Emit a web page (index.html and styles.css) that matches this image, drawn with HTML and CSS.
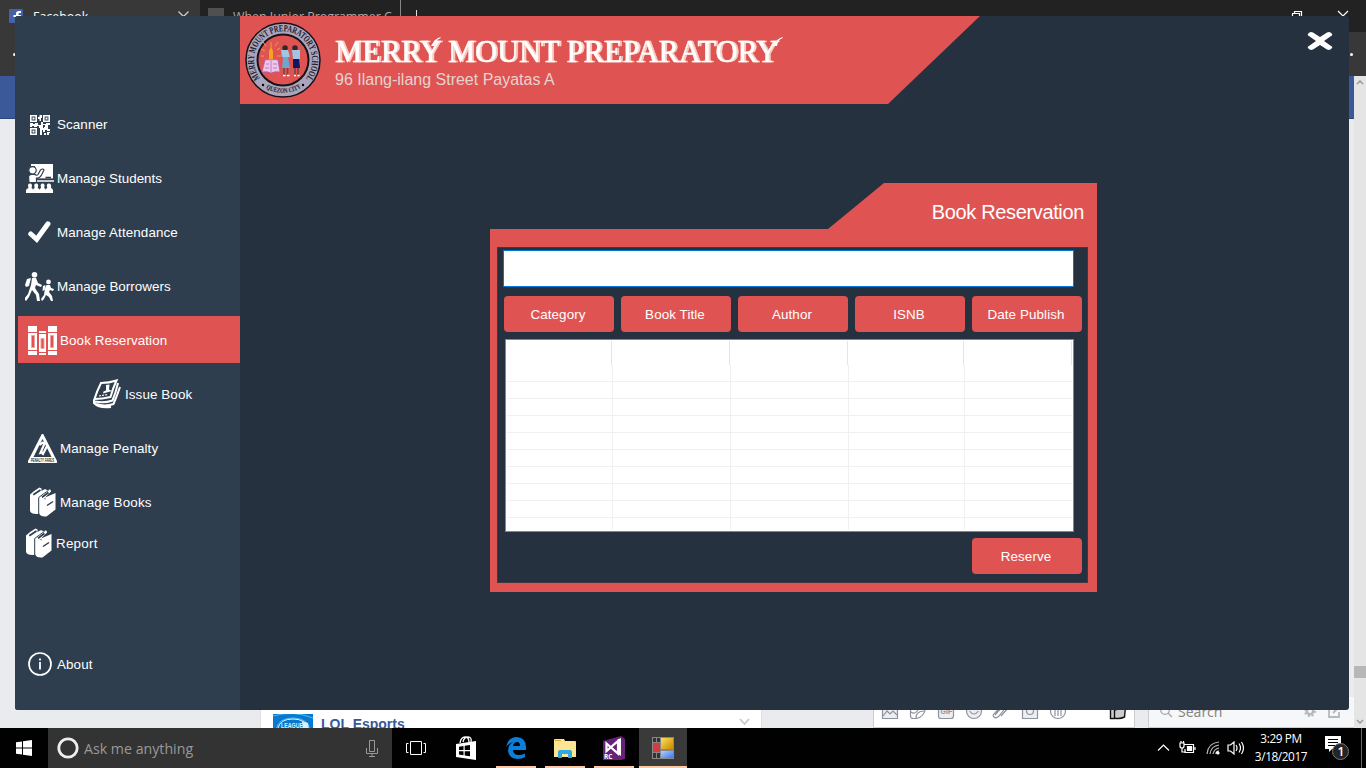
FILE: index.html
```html
<!DOCTYPE html>
<html lang="en">
<head>
<meta charset="utf-8">
<title>Merry Mount Preparatory</title>
<link rel="stylesheet" href="styles.css">
</head>
<body>
<svg width="0" height="0" class="defs">
  <symbol id="books" viewBox="0 0 26 30">
    <path fill="#fff" d="M0 7.500Q5 3 9.500 .5L11.500 1.500V4L14 2.500Q16 1.500 17 3.500L19.500 2.500Q21 2 21 4.500L15 10.500 25.500 6V22.500L16.500 29.500Q10 30 9.300 26.500L8 27Q1 27.500 0 24z"/>
    <path fill="none" stroke="#2f3e4e" stroke-width="1" d="M8.700 27V10.500Q13 7 18.500 3.500"/>
    <path fill="none" stroke="#2f3e4e" stroke-width="1.700" d="M3.300 7.800 10.500 3M12 10.300 18.500 5.500"/>
    <path stroke="#2f3e4e" stroke-width="1.500" d="M17 18.500 23 14.500"/>
    <path stroke="#2f3e4e" stroke-width=".6" fill="none" d="M13.800 11.500 16 12"/>
  </symbol>
</svg>
<div class="desktop">
  <div class="browser">
    <div class="tabs">
      <div class="tab active">
        <svg width="14" height="14" viewBox="0 0 14 14"><rect width="14" height="14" rx="1" fill="#4362a8"/><path d="M7 14V8H4.500V6H7V4.500Q7 2 10 2h2v2h-1.500q-1 0-1 1v1H12l-.4 2H9.500v6z" fill="#fff"/></svg>
        <span>Facebook</span>
        <svg width="11" height="8" viewBox="0 0 11 8"><path d="M.5 .5 5.500 5.500 10.500 .5" fill="none" stroke="#ccc" stroke-width="1.300"/></svg>
      </div>
      <div class="tab second"><i></i><span>When Junior Programmer C</span></div>
      <div class="newtab"></div>
      <svg class="winctl" width="66" height="16" viewBox="0 0 66 16"><path d="M7.500 16v-2.500h7V16M9.500 13.500v-2h7V16M53 11l5 5 5-5" fill="none" stroke="#fff" stroke-width="1.200"/></svg>
    </div>
    <div class="toolbar"><span class="back"></span><span class="dot"></span></div>
    <div class="site">
      <div class="page">
        <div class="bluebar"></div>
        <div class="feedrow">
          <div class="post">
            <svg width="40" height="16" viewBox="0 0 40 16"><rect width="40" height="16" fill="#0879cf"/><path d="M0 2Q20-4 40 4M3 16Q5 4 20 4T37 16" stroke="#55b9ee" fill="none"/><path d="M5 14Q7 5 20 5T35 15" stroke="#d8f1ff" fill="none"/><path d="M29 7l6 2 1 7h-6z" fill="#d8f1ff"/><text x="8" y="13.500" font-size="7" font-weight="bold" fill="#d8f1ff" textLength="22" lengthAdjust="spacingAndGlyphs">LEAGUE</text></svg>
            <b>LOL Esports</b>
            <svg class="chev" width="11" height="8" viewBox="0 0 11 8"><path d="M1 1 5.500 6 10 1" fill="none" stroke="#c5c8ce" stroke-width="1.800"/></svg>
          </div>
          <div class="composer">
            <svg width="254" height="18" viewBox="0 0 254 18" fill="none" stroke="#8e939d" stroke-width="1.200">
              <path d="M8.500 0V14.500H23.500V0" fill="#eceef0"/><path d="M9 12l4-5 3 3 3-3 4 4"/>
              <path d="M36.500 4v8q0 2.500 3 2.500h3q8-2 9-10.500V2M37 8q4 3 7-2M42 14q0-7 8-7"/>
              <path d="M64.500 0V12q0 2.500 2.500 2.500h10q2.500 0 2.500-2.500V0" fill="#eceef0"/><text x="66.500" y="10" font-size="7" font-weight="bold" fill="#8e939d" stroke="none">GIF</text>
              <circle cx="100" cy="7" r="7.500" fill="#eceef0"/><path d="M95.500 7q4.500 6 9 0"/>
              <path d="M121 11l8-9q3-3 4 0l-8 10q-3 3-5 1t1-4l7-8M127 12l8-9"/>
              <path d="M148.500 1V14.500h15V1" fill="#eceef0"/><circle cx="156" cy="7" r="3.500"/>
              <circle cx="184" cy="7" r="7.500"/><path d="M181 3v9M184 3v9M187 3v9"/>
              <path d="M236.500 5v9.500h4V5zM240.500 6q3 0 4-3h7l-1 10q-5 2.500-10 1z" stroke="#111" stroke-width="1.400" fill="#ccc"/>
            </svg>
          </div>
          <div class="chatsearch">
            <svg width="14" height="14" viewBox="0 0 14 14"><circle cx="6" cy="5" r="4.300" fill="none" stroke="#a3a7ae" stroke-width="1.300"/><path d="M9 8l4 4" stroke="#a3a7ae" stroke-width="1.300"/></svg>
            <span>Search</span>
            <svg width="38" height="14" viewBox="0 0 38 14"><circle cx="6" cy="6" r="3.200" fill="none" stroke="#b5b8be" stroke-width="2.500"/><circle cx="6" cy="6" r="5" fill="none" stroke="#b5b8be" stroke-width="2" stroke-dasharray="2 1.930"/><path d="M30 2h-5v10h10V7M29 8l6-6" fill="none" stroke="#b5b8be" stroke-width="1.800"/></svg>
          </div>
        </div>
      </div>
      <div class="scroll">
        <svg width="12" height="12" viewBox="0 0 12 12"><path d="M3 8l3-3 3 3" fill="none" stroke="#999" stroke-width="1.500"/></svg>
        <i></i>
        <svg width="12" height="12" viewBox="0 0 12 12"><path d="M3 4l3 3 3-3" fill="none" stroke="#999" stroke-width="1.500"/></svg>
      </div>
    </div>
  </div>

  <div class="taskbar">
    <div class="start"><svg width="16" height="16" viewBox="0 0 16 16" fill="#fff"><path d="M0 2.200 6 1.400V7.500H0zM7 1.200 16 0V7.500H7zM0 8.500H6V14.600L0 13.800zM7 8.500H16V16L7 14.800z"/></svg></div>
    <div class="ask">
      <svg width="22" height="22" viewBox="0 0 22 22"><circle cx="11" cy="11" r="9.200" fill="none" stroke="#eee" stroke-width="2.800"/></svg>
      <span>Ask me anything</span>
      <svg class="mic" width="12" height="17" viewBox="0 0 12 17"><path d="M3.500.5h5v11h-5zM.5 8v5.500h11V8M6 13v3M3 16.500h6" fill="none" stroke="#999"/></svg>
    </div>
    <div class="app"><svg width="22" height="16" viewBox="0 0 22 16"><path d="M5.500 1.500h11v13h-11zM3.500 3.500h-2v9h2M18.500 3.500h2v9h-2" fill="none" stroke="#fff"/></svg></div>
    <div class="app store"><svg width="22" height="24" viewBox="0 0 22 24"><path d="M5 7Q6 1 10 1t4 5M8 6q1-5 5-5t3 5" fill="none" stroke="#fff" stroke-width="1.300"/><path d="M1 8 21 5V24L1 21z" fill="#fff"/><path d="M4 10.700 8.500 10V14H4zM9.700 9.800 15 9V14H9.700zM4 15.200H8.500V19.200L4 18.600zM9.700 15.200H15V20.200L9.700 19.500z" fill="#000"/></svg></div>
    <div class="app run"><svg width="20" height="22" viewBox="0 0 20 22"><path d="M0 10Q2 0 11 0q9 1 9 10v3H7q0 5 6 5 3 0 6-1.500V20q-3 2-8 2-8-1-9-8 0-7 6-9Q3 6 0 10zM7 9h7q0-4-3-4T7 9z" fill="#0a80dc"/></svg></div>
    <div class="app run"><svg width="22" height="19" viewBox="0 0 22 19"><path d="M0 1q0-1 1-1h9l1 2h10q1 0 1 1v15H0z" fill="#fde594"/><path d="M1 1.500h6" stroke="#e8a323"/><path d="M4 19v-6q0-2 2-2h10q2 0 2 2v6h-4v-4H8v4z" fill="#30a9de"/></svg></div>
    <div class="app run vs"><svg width="23" height="24" viewBox="0 0 23 24"><path d="M0 5 18 0 22 3V23L18 24H0z" fill="#68217a"/><path d="M3.500 7.500 15 17.500V5L3.500 15z" fill="none" stroke="#fff" stroke-width="2.200"/><path d="M14 4l4-2V20l-4-3z" fill="#fff"/><text x="1" y="23" font-size="6.500" font-weight="bold" fill="#fff">RC</text></svg></div>
    <div class="app run current"><svg width="22" height="22" viewBox="0 0 22 22"><defs><linearGradient id="y" x2="1" y2="1"><stop stop-color="#ffdf55"/><stop offset="1" stop-color="#c98a00"/></linearGradient><linearGradient id="b" x2="1" y2="1"><stop stop-color="#b3d0ff"/><stop offset="1" stop-color="#3a77e8"/></linearGradient></defs><rect width="22" height="22" fill="#85878b"/><path d="M1 1h3v4H1zM5 1h3v4H5zM1 16h3v5H1zM5 16h3v5H5z" fill="#333"/><path d="M9 1h12v11H9z" fill="url(#y)"/><path d="M1 6h7v9H1z" fill="#d73c3c"/><path d="M9 14h12v7H9z" fill="url(#b)"/></svg></div>
    <div class="tray">
      <svg width="90" height="20" viewBox="0 0 90 20" fill="none" stroke="#fff" stroke-width="1.200">
        <path d="M2 12.500l5.500-5.500L13 12.500"/>
        <path d="M28 6.500h9.500v8H29V11M39 9v3"/><path d="M31.500 8.500h4v4h-4z" fill="#fff"/><path d="M24 5v3q0 2 2 2t2-2V5zM25 3v2M27.500 3v2M26 10v4h4"/>
        <path d="M51 16Q52 5 63 4M54 16q1-8 9-9M57 16q1-5 6-6" stroke="#bbb"/><path d="M60 16q0-3 3-3" stroke="#fff"/><circle cx="62" cy="15" r="1" fill="#fff"/>
        <path d="M72 7h2.500L78 4v12l-3.500-3H72zM80 7q2 3 0 6M83 5.500q3 4.500 0 9M85.500 4q4 6 0 12"/>
      </svg>
      <div class="clock"><span>3:29 PM</span><span>3/18/2017</span></div>
      <svg class="note" width="26" height="25" viewBox="0 0 26 25"><path d="M1 0h16v13H8l-3 3v-3H1z" fill="#fff"/><path d="M4 3.500h10M4 6.500h10M4 9.500h7" stroke="#000" stroke-width="1.200"/><circle cx="16.500" cy="15.500" r="8" fill="#252525" stroke="#777"/><text x="13.500" y="20" font-size="12" font-weight="600" fill="#fff">1</text></svg>
      <i class="peek"></i>
    </div>
  </div>

  <div class="window">
    <nav class="sidebar">
      <a class="item i20"><svg width="20" height="20" viewBox="0 0 20 20"><path fill="none" stroke="#fff" stroke-width="1.600" d="M.8.800h5.400v5.400H.8zM13.800.800h5.400v5.400h-5.400zM.8 13.800h5.400v5.400H.8z"/><path fill="#fff" d="M2.500 2.500h2v2h-2zM15.500 2.500h2v2h-2zM2.500 15.500h2v2h-2zM8 2h1.500V0H12v3h-1v3H9.500V4H8zM0 8h3v1h2V8h3v2h3V7h2v2h3V8h4v2h-2v2h-3v-2h-2v3H9v-2H7v1H4v-1H2v1H0zM10 13h4v-1h4v2h2v2h-3v-1h-2v2h-2v-2h-1v5h-2zM14 18h2v2h-2zM17 17h3v1h-1v2h-2z"/></svg>Scanner</a>
      <a class="item i27"><svg width="28" height="29" viewBox="0 0 28 29"><path d="M5 0H27V14.500H5z" fill="#fff"/><path d="M4 2H9V16H4z" fill="#2f3e4e"/><circle cx="6.500" cy="6.300" r="3.700" fill="#fff" stroke="#2f3e4e" stroke-width="1.200"/><path d="M2.500 12.500Q3 10.500 5.500 10.500H9Q11 12 12 10.500L14.500 6Q17 4 18 6L15.500 11Q13.500 14.500 10.500 14V18.500H3z" fill="#fff" stroke="#2f3e4e" stroke-width="1.200"/><path d="M12 15.500H27M19.500 13.500h5.500" stroke="#2f3e4e" stroke-width="1.500"/><path d="M11 17H28" stroke="#fff" stroke-width="1.700"/><path d="M0 29V26.500q0-2 2.500-2.500-1.500-4.500 1.500-4.500T5.500 24q1.500.5 1.500 2 0-1.500 1.700-2-1.500-4.500 1.500-4.500t1.500 4.500q1.700.5 1.700 2 0-1.500 1.700-2-1.500-4.500 1.500-4.500t1.500 4.500q1.700.5 1.700 2 0-1.500 1.500-2-1.500-4.500 1.500-4.500T25 24q2 .5 2 2.500V29z" fill="#fff"/></svg>Manage Students</a>
      <a class="item i23"><svg width="23" height="22" viewBox="0 0 23 22"><path d="M2.800 13 8.700 18.300 20 2.800" fill="none" stroke="#fff" stroke-width="5" stroke-linecap="round"/></svg>Manage Attendance</a>
      <a class="item i29"><svg width="29" height="29" viewBox="0 0 29 29" fill="#fff"><circle cx="9.500" cy="2.800" r="2.800"/><path d="M7 6h4l2 5 4 2-1 2-5-2-1 3 4 6 1 7h-3l-1-6-4-5-3 7-3 4-2-2 4-5 3-9zM2 7l4-1-2 8-3 1-1-2zM23.500 7.500a2.400 2.400 0 1 1 0 4.800 2.400 2.400 0 0 1 0-4.800M21.500 13h3.500l1 3 3 1-1 2-3-1-1 2 3 4 1 5h-2l-2-4-3-2-2 4-2 2-1-2 3-4 1-7zM18 14l2.500-1-1 5-2 1z"/></svg>Manage Borrowers</a>
      <a class="item i30 selected"><svg width="29" height="29" viewBox="0 0 29 29"><path fill="#fff" d="M0 0h9v29H0zM11 5h7v24h-7zM20 0h9v29h-9z"/><path fill="none" stroke="#df5452" d="M0 6.500h9M0 24.500h9M11 7.500h7M11 26.500h7M20 6.500h9M20 24.500h9"/><path fill="#df5452" stroke="#f0a3a0" stroke-width="1" d="M3.500 9.500h3v12h-3zM13 12.500h3v10h-3zM22.500 9.500h3v12h-3z"/></svg>Book Reservation</a>
      <a class="item i28 sub"><svg width="28" height="30" viewBox="0 0 28 30" fill="none" stroke="#fff" stroke-width="2"><path d="M8 4Q16 4 23.500 1.500 20 9 17.500 18 9 20 1.500 20 4 12 8 4z"/><path d="M25 4Q23 13 19.500 21.500 11 24.500 2 22.500M27 8Q24 17 20.500 25 12 28 3 25M1 20.500V24Q6 29.500 18 28"/><path d="M13 6l3.500-.5-.5 5 3 1.500-9 2.500.5-2 2.500-1z" fill="#fff" stroke="none"/><path d="M6 17l9-1.500" stroke-width="1.200" stroke-dasharray="2 1"/></svg>Issue Book</a>
      <a class="item i30"><svg width="29" height="29" viewBox="0 0 29 29"><path d="M13.500 .5Q14.500-.8 15.500 .5L29 27Q29.500 29 28 29H1Q-.5 29 0 27z" fill="#fff"/><path d="M14.500 5 23.500 23H5.500z" fill="#2f3e4e"/><path d="M11.500 11q4-4 5-1.500l-4 9.500 4-1M14.500 21 19 12" fill="none" stroke="#fff" stroke-width="2.200"/><text x="3" y="27.500" font-size="4.500" font-weight="bold" fill="#18232d" textLength="23" lengthAdjust="spacingAndGlyphs">PENALTY FARES</text></svg>Manage Penalty</a>
      <a class="item books"><svg width="26" height="30"><use href="#books"/></svg>Manage Books</a>
      <a class="item report"><svg width="26" height="30"><use href="#books"/></svg>Report</a>
      <a class="item about"><svg width="24" height="24" viewBox="0 0 24 24"><circle cx="12" cy="12" r="11" fill="none" stroke="#fff" stroke-width="1.700"/><path d="M12 10v7.500M12 6.500v2" stroke="#fff" stroke-width="1.800"/></svg>About</a>
    </nav>
    <main class="main">
      <header class="banner">
        <svg class="seal" width="78" height="78" viewBox="0 0 78 78">
          <defs><path id="arc" d="M16 57A29 29 0 1 1 62 57"/><path id="low" d="M17 64A34.500 34.500 0 0 0 61 64"/></defs>
          <circle cx="39" cy="39" r="31" fill="none" stroke="#aaa5bd" stroke-width="12"/>
          <circle cx="39" cy="39" r="37" fill="none" stroke="#171219" stroke-width="1.500"/>
          <circle cx="39" cy="39" r="25.500" fill="none" stroke="#171219" stroke-width="2"/>
          <g font-family="Liberation Serif" font-weight="bold" fill="#201a28"><text font-size="9.500"><textPath href="#arc" textLength="129" lengthAdjust="spacingAndGlyphs">MERRY MOUNT PREPARATORY SCHOOL</textPath></text><text font-size="7"><textPath href="#low" startOffset="6" textLength="37" lengthAdjust="spacingAndGlyphs">QUEZON CITY</textPath></text></g>
          <circle cx="19" cy="64" r="1.200"/><circle cx="59" cy="64" r="1.200"/>
          <path d="M27 28V21M21 30l-4-2M33 29l3-2M22 25l-3-4M31 25l3-4M20 35h-3M33 35h4" stroke="#e8a33a" stroke-width="1"/>
          <path d="M25 30q2-6 4 0v9h-4z" fill="#f5a51d"/><path d="M21 39q3-1 6 0 4-1 7 0l2 12q-5-1-9 1-4-2-9-1z" fill="#ecc5ec" stroke="#b45ba8" stroke-width=".8"/><path d="M27 40v11M22 43h3M29 43h4M21 47h4M29 47h4" stroke="#b45ba8" stroke-width=".7"/>
          <g fill="#3b2424"><circle cx="41" cy="27" r="2.800"/><circle cx="51" cy="27" r="2.800"/></g>
          <path d="M37.500 31v-9M56 31v-9" stroke="#a96d5b" stroke-width="1.500"/>
          <path d="M37 29h7l2 7h-8zM48 29h8v9h-7z" fill="#9fc6e5"/><path d="M39 36h5l2 11h-8z" fill="#6ea6cd"/><path d="M49 38h6l1 9h-7z" fill="#0e1760"/>
          <path d="M40 47v7M43.500 47v7M51 47v7M54 47v7" stroke="#7b4740" stroke-width="1.700"/><path d="M39 54.500h2.500M43 54.500h2.500M50 54.500h2M53.500 54.500h2" stroke="#fff" stroke-width="1.500"/>
        </svg>
        <div class="names">
          <svg width="452" height="34" viewBox="0 0 452 34"><text class="school" x="0" y="29" textLength="443" lengthAdjust="spacingAndGlyphs">MERRY MOUNT PREPARATORY</text><path class="swash" d="M96 13q4-8 10-9l-1 1.500q-4 1-5 7.500M438 13q4-8 10-9l-1 1.500q-4 1-5 7.500" fill="#fff"/></svg>
          <p>96 Ilang-ilang Street Payatas A</p>
        </div>
      </header>
      <svg class="close" width="26" height="18" viewBox="0 0 26 18"><path d="M.5 3Q2-1 6 .5L13 5 20 .5Q24-1 25.500 3L17 9 25.500 15Q24 19 20 17.500L13 13 6 17.500Q2 19 .5 15L9 9z" fill="#fff"/></svg>
      <section class="panel">
        <h2>Book Reservation</h2>
        <div class="frame">
          <div class="field"></div>
          <div class="filters"><span class="btn">Category</span><span class="btn">Book Title</span><span class="btn">Author</span><span class="btn">ISNB</span><span class="btn">Date Publish</span></div>
          <div class="list">
            <div class="head"><i></i><i></i><i></i><i></i><i></i></div>
            <div class="row"><i></i><i></i><i></i><i></i></div><div class="row"><i></i><i></i><i></i><i></i></div><div class="row"><i></i><i></i><i></i><i></i></div>
            <div class="row"><i></i><i></i><i></i><i></i></div><div class="row"><i></i><i></i><i></i><i></i></div><div class="row"><i></i><i></i><i></i><i></i></div>
            <div class="row"><i></i><i></i><i></i><i></i></div><div class="row"><i></i><i></i><i></i><i></i></div><div class="row"><i></i><i></i><i></i><i></i></div>
            <div class="row last"><i></i><i></i><i></i><i></i></div>
          </div>
          <span class="btn reserve">Reserve</span>
        </div>
      </section>
    </main>
  </div>
</div>
</body>
</html>
```
FILE: styles.css
```css
* { box-sizing: border-box; }
body { margin: 0; font-family: "Liberation Sans", Arial, sans-serif; overflow: hidden; }
svg { display: block; flex: none; }
.defs { position: absolute; }
.desktop { position: relative; width: 1366px; height: 768px; display: flex; flex-direction: column; }

.browser { height: 728px; display: flex; flex-direction: column; overflow: hidden; }
.tabs { height: 32px; flex: none; display: flex; background: #222; color: #fff; font: 12.4px/16px "Open Sans", sans-serif; }
.tab { display: flex; height: 32px; }
.tab.active { width: 200px; background: #383838; padding: 9px 11px 0 9px; }
.tab.active span { margin-left: 10px; flex: 1; }
.tab.active svg:last-child { margin-top: 2px; }
.tab.second { width: 201px; padding: 8px 9px 0 8px; border-right: 1px solid #888; color: #aaa; }
.tab.second i { width: 16px; height: 16px; background: #505050; margin-right: 9px; flex: none; }
.tab.second span { white-space: nowrap; width: 159px; padding-top: 1px; }
.newtab { width: 1px; height: 12px; background: #ddd; margin: 10px 0 0 15px; }
.winctl { margin-left: 868px; }
.toolbar { height: 44px; flex: none; background: #383838; display: flex; align-items: center; justify-content: space-between; padding: 0 14px 0 13px; }
.toolbar span { width: 3px; height: 3px; border-radius: 50%; background: #fff; }
.toolbar .dot { margin-right: -1px; }
.site { flex: 1; display: flex; background: #e9ebee; }
.page { flex: 1; display: flex; flex-direction: column; justify-content: space-between; }
.bluebar { height: 43px; background: #3b5998; border-bottom: 1px solid #29487d; }
.feedrow { display: flex; height: 31px; }
.post { margin-left: 260px; width: 502px; background: #fff; border: solid #dddfe2; border-width: 0 1px; padding: 17px 11px 0 12px; display: flex; }
.post b { font-size: 14px; line-height: 18px; color: #365899; margin: 1px 0 0 8px; flex: 1; }
.chev { margin: 4px 0 0; }
.composer { margin-left: 111px; width: 262px; background: #fff; border: 1px solid #c9ccd1; border-top: 0; padding: 7px 0 0; }
.chatsearch { margin-left: 13px; width: 206px; background: #f6f7f9; border: solid #ccc; border-width: 0 0 1px 1px; display: flex; padding: 8px 12px 0 10px; color: #888; font: 14px/14px "Noto Sans", sans-serif; }
.chatsearch span { margin-left: 5px; flex: 1; }
.scroll { width: 12px; flex: none; background: #e5e5e5; display: flex; flex-direction: column; }
.scroll i { height: 12px; background: #b7b7b7; margin: 578px 0 38px; }

.taskbar { height: 40px; display: flex; background: #020101; color: #fff; font-family: "Open Sans", sans-serif; }
.start { width: 48px; display: flex; align-items: center; justify-content: center; }
.ask { width: 344px; background: #333; display: flex; align-items: center; padding: 0 14px 0 9px; color: #999; font-size: 14.2px; }
.ask span { margin-left: 5px; flex: 1; }
.app { width: 48px; display: flex; align-items: center; justify-content: center; }
.store { margin-left: 2px; }
.store + .run { margin-left: 6px; }
.run { width: 40px; border-bottom: 2px solid #fcc9a5; margin-right: 9px; padding-top: 2px; }
.run.vs { margin-right: 5px; }
.run.current { width: 48px; background: #3a3a3a; margin-right: 0; }
.tray { flex: 1; display: flex; justify-content: flex-end; align-items: center; }
.clock { display: flex; flex-direction: column; align-items: center; font-size: 11.8px; line-height: 18px; letter-spacing: -.4px; width: 60px; margin: 0 13px 2px 5px; }
.note { margin: 1px 11px 0 0; }
.peek { width: 5px; height: 40px; border-left: 1px solid #666; }

/* application window floating over the browser */
.window { position: absolute; left: 15px; top: 16px; width: 1334px; height: 694px; display: flex; border-radius: 3px; overflow: hidden; background: #25313f; }
.sidebar { width: 225px; background: #2f3e4e; padding-top: 81px; display: flex; flex-direction: column; }
.item { height: 54px; flex: none; display: flex; align-items: center; color: #fff; font-size: 13.4px; letter-spacing: .1px; white-space: nowrap; }
.i20 { padding: 2px 0 0 15px; gap: 7px; line-height: 18px; }
.i27 { padding-left: 11px; gap: 3px; letter-spacing: 0; }
.i23 { padding-left: 13px; gap: 6px; }
.i29 { padding-left: 10px; gap: 3px; letter-spacing: .04px; }
.i30 { padding-left: 13px; gap: 3px; }
.selected { height: 47px; margin: 3px 0 4px 3px; padding: 1px 0 0 10px; background: #df5452; }
.i28 { padding-left: 78px; gap: 4px; }
.books { padding-left: 15px; gap: 4px; letter-spacing: .2px; }
.report { padding-left: 11px; gap: 4px; height: 28px; letter-spacing: .25px; }
.about { margin-top: 80px; padding-left: 13px; gap: 5px; }

.main { flex: 1; display: grid; grid-template-columns: 740px 1fr; grid-template-rows: 88px auto; }
.banner { background: #df5452; clip-path: polygon(0 0, 740px 0, 648px 88px, 0 88px); display: flex; }
.seal { margin: 5px 0 0 4px; }
.names { margin: 17px 0 0 13px; }
.school { font: 32px "Liberation Serif", serif; fill: #fff; stroke: #fff; stroke-width: .5px; filter: drop-shadow(2px 0 0 #f7cfc4); }
.names p { margin: 3px 0 0; font-size: 16px; line-height: 20px; color: #e6d3cf; }
.close { justify-self: end; margin: 16px 16px 0 0; }
.panel { grid-column: 1 / 3; width: 607px; height: 409px; margin: 79px 0 0 250px; background: #df5452; clip-path: polygon(0 46px, 338px 46px, 394px 0, 100% 0, 100% 100%, 0 100%); padding: 0 9px 9px 7px; }
.panel h2 { margin: 0; height: 64px; padding: 18px 4px 0 0; text-align: right; color: #fff; font-weight: normal; font-size: 20px; line-height: 23px; letter-spacing: -.35px; }
.frame { height: 336px; background: #25313f; box-shadow: inset 0 0 0 1px #403743; padding: 3px 6px 0; display: flex; flex-direction: column; }
.field { width: 571px; height: 37px; background: #fff; border: 1px solid #0078d7; }
.filters { display: flex; gap: 7px; margin: 9px 0 7px 1px; }
.btn { width: 110px; height: 36px; flex: none; border-radius: 4px; background: #df5452; color: #fff; font-size: 13.4px; letter-spacing: .1px; line-height: 36px; text-align: center; padding: 1px 2px 0 0; }
.list { margin-left: 2px; width: 569px; height: 193px; border: 1px solid #828790; background: #fff; overflow: hidden; flex: none; }
.head { height: 25px; display: grid; grid-template-columns: 106px 118px 118px 116px 108px; padding-top: 1px; }
.head i { border-right: 1px solid #e5e5e5; }
.row { height: 17px; display: grid; grid-template-columns: 106px 118px 118px 116px; margin: 0 1px; border-bottom: 1px solid #f0f0f0; }
.row i { border-right: 1px solid #f0f0f0; height: 17px; }
.row.last { height: 12px; border: 0; overflow: hidden; }
.reserve { align-self: flex-end; margin: 6px 0 0; }
```
